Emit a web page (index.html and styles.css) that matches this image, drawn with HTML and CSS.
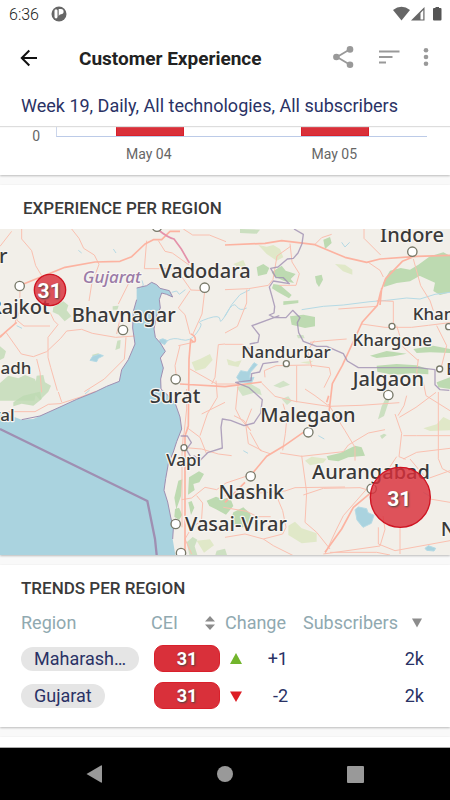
FILE: index.html
```html
<!DOCTYPE html>
<html lang="en">
<head>
<meta charset="utf-8">
<meta name="viewport" content="width=device-width, initial-scale=1">
<title>Customer Experience</title>
<link rel="stylesheet" href="styles.css">
</head>
<body>
<header class="top">
  <div class="status">
    <span class="clock">6:36</span>
    <svg class="app-dot" width="16" height="16" viewBox="0 0 16 16" aria-hidden="true"><circle cx="8" cy="8" r="7.500" fill="#666"/><path d="M3.500 4.800q0-1.600 1.500-1.600t1.500 1.600v6q0 1.600-1.500 1.600t-1.500-1.600z" fill="#fff"/><path d="M7.700 3h2.300a2.500 2.500 0 0 1 0 5.200q-1.500 0-2.300 1.800z" fill="#fff"/></svg>
    <svg class="signals" width="50" height="16" viewBox="0 0 50 16" aria-hidden="true">
      <path d="M0 4Q8.500-2.500 17 4L8.500 14.500Z" fill="#666"/>
      <path d="M31.500 1v13.500H18z" fill="#666"/><path d="M27.500 7l2.800-3v9.500h-2.800z" fill="#fff"/>
      <path d="M40 3q0-1 1-1h1.500V1h3.500v1h1.500q1 0 1 1v10.500q0 1-1 1h-6.500q-1 0-1-1z" fill="#555"/>
    </svg>
  </div>
  <div class="appbar">
    <button class="icon-btn back" aria-label="Back"><svg width="18" height="18" viewBox="0 0 18 18"><path d="M17 9H2M9.300 1.500L1.800 9l7.500 7.500" fill="none" stroke="#111" stroke-width="2"/></svg></button>
    <h1>Customer Experience</h1>
    <button class="icon-btn" aria-label="Share"><svg width="21" height="24" viewBox="0 0 21 24"><path d="M17 3.200L4 11l13 7.800" fill="none" stroke="#999" stroke-width="1.800"/><circle cx="17" cy="3.400" r="3.300" fill="#999"/><circle cx="3.400" cy="11" r="3.300" fill="#999"/><circle cx="17" cy="18.800" r="3.300" fill="#999"/></svg></button>
    <button class="icon-btn sort" aria-label="Sort"><svg width="21" height="16" viewBox="0 0 21 16"><path d="M0 1.500h20.500M0 7h13.500M0 12.500h7" stroke="#999" stroke-width="2"/></svg></button>
    <button class="icon-btn more" aria-label="More options"><svg width="6" height="20" viewBox="0 0 6 20"><g fill="#999"><circle cx="3" cy="2.300" r="2.300"/><circle cx="3" cy="9" r="2.300"/><circle cx="3" cy="15.700" r="2.300"/></g></svg></button>
  </div>
  <p class="filters">Week 19, Daily, All technologies, All subscribers</p>
</header>

<main>
  <section class="card chart" aria-label="Daily chart">
    <span class="zero">0</span>
    <div class="plot"><i class="bar"></i><i class="bar"></i></div>
    <div class="days"><span>May 04</span><span>May 05</span></div>
  </section>

  <section class="card">
    <h2 class="map-title">EXPERIENCE PER REGION</h2>
    <svg class="map" viewBox="0 0 1350 978" preserveAspectRatio="xMidYMid slice" role="img" aria-label="Map of regions">
      <rect width="1350" height="978" fill="#f2efe9"/>
      <g class="wood">
        <path d="M0 352l18 15-6 20-12 6zM0 462l25-22 30 8 20-10 30 12 8 25-10 40H0zM110 440l20-2 5 22 18 10-8 18-25 25-18-20zM160 235l30-18 15 12-5 15 14 18-20 15-18-20-18-8zM338 232l18-2-4 12h-14zM352 335l10-2-2 25-14 5zM275 378l22-6-8 16z" opacity=".75"/>
        <path d="M40 520l30-20 50-12 5 22-25 20-35-6-25 8z" opacity=".8"/>
        <path d="M770 115l20-10 18 12-8 18-26 6zM815 130l30-20 12 15 30 10-15 15 10 12-30-6-30-14zM945 142l20-5 4 15-12 22-8-12zM970 32l20-8 5 18-20 18zM820 165l20 3 35 30-8 10-35-20-16-10zM850 217l45-3v8l-45 6z"/>
        <path d="M1158 145l12-20 32-8 28 5 25-15 10 30-35 20-40 5-38 12-2-12zM1255 107l35-25 40-12 20 10v110l-30 8-20-12 5-25-45-20-12-10z"/>
        <path d="M870 262l40-5 35 7v28l-30 5-40-10zM1130 410l60-5 60 4 35 12v15l-50-3-55 5-48-10zM1110 380l50-14 60 8-40 8-50 5zM1240 360l60-10 50 10v12l-60-2-40 2zM1310 460l40-15v35l-35-5z"/>
        <path d="M710 475l40-12 30 18 5 18-22-8-35 10zM820 470l30-15 20 12-30 10zM845 510l20-8 10 14-14 12zM890 318l20 0 4 10h-20z" opacity=".6"/>
        <path d="M980 682l40-10 45-22 20 5 10 25-50 5-30 12-30-4z"/>
        <path d="M535 755l12-4-4 50-14 40-6-35zM567 745l30-18 15 8-14 25-18 5 4 18-20 14zM525 840l12-4 10 22-10 15-14-10zM565 820l10-4 8 20-10 22zM620 815l28-12 20 8 22-6 10 26-22 26-30-16-20-10zM700 850l30-15 20 18 10 30-40 15-30-20z"/>
        <path d="M720 0l60 2-10 12-50-2zM1145 532l14-28 8 12-15 45-18 10zM1140 620l12-6 8 4-14 12z" opacity=".75"/>
        <path d="M560 940l18-16 14 8-8 20 8 26h-24zM650 965l25-6 6 19h-35z" opacity=".7"/>
      </g>
      <g class="scrub">
        <path d="M775 48l25 5 20-5 20 12 10 25-20 10-30-20zM1005 105l30 2 22 15v15l-28-10zM915 695l20-12 45 6-10 12-40 8zM1270 598l40-12 20-22 20 10v30l-60 2zM575 400l25-10 30-15 8 18-22 25-30 8zM680 390l25 8 20-4-10 20-30-6zM865 890l20-12 20 20 45 15v25l-45 5-40-25zM590 935l40-4 12 18-30 22zM700 105l30-12 8 18-20 5zM900 400l40-5-12 10z"/>
      </g>
      <path class="sea" d="M410 177L440 170 455 160 470 167 480 178 508 185 518 204 500 196 485 192 478 212 481 237 470 260 462 300 466 325 481 342 496 367 481 387 490 417 482 450 483 480 505 500 526 524 540 564 545 600 530 638 520 669 505 704 497 749 492 784 503 819 512 864 520 899 518 930 526 978H0V550L45 565 65 572 100 570 120 561 180 534 230 511 285 489 320 472 358 457 365 422 385 392 405 345 398 297 400 247 410 212Z"/>
      <g class="river">
        <path d="M478 333q10-8 24 2l-8 12-16-8M270 394l8-12 20-6 12 4-15 8-5 10z" fill="#aad3df"/>
        <path d="M710 445l12-20 20 4 20-28 10 6-20 22-4 18 14-2-8 18-34-4zM1065 842l10-8 25 5 4 12 18 8-8 24-25 12-18-22-4-22zM1275 958l10-8 22 8-5 8-22-2z" fill="#aad3df"/>
        <path d="M500 336q20-12 45-4t45-20 10-30 25-14 35 4 20-20 30-20 30 5M515 190l15-4 8 10 18-14M420 180l10-12-4-14M675 262l20-35 25-30 30-15M905 242l65-10 60-4 80-10 50-4 60-7 40 3 45-14 45-6M955 620l18 10M255 495l14-12M730 665l14 8M1025 40l10 14 14-14M1270 790l20 12M340 60l8 12M50 290l16 8M235 64l10 8" fill="none"/>
      </g>
      <g class="road">
        <path d="M65 0v30l30 35 12 45 18 30M0 52l35-45M215 0l22 28 14 30 32 20 14 28-22 60-8 50M440 35l-7 84h95l45 64 45 2M60 187l-2 60-8 26 22 18 78 0M150 250l12 25 12 12-30 38v60l8 30 20 70M0 320l18-10 46 65 36 8 40-15 42-40 18-22 45-5 32 12 70 12 58-4M378 325l-5 65-60 60-60 38M15 310l30-25 5-28M110 390l10 40 5 60M360 270l-10 45M385 165l-30 60"/>
        <path d="M550 0l28 18h50l50 20M475 35l20 32 22 5 50 36M570 185l-35 52 20 20 15 58M614 187l-8 68-28 62M675 345l-20 2-10 98-10 20M570 420l80 45h65M535 350l45-10M540 350l-15 60 5 40M560 480v60l-8 75M560 595l40 30 20 50M600 620l22-65 30-50-4-50M675 520l-70 35"/>
        <path d="M675 182l70-3 60-10 14-18 12-70 42-30M740 182v40l-28 70-37 20M675 346h52l30 18M870 44l6 55 22 35-10 35-50 0M945 46l20-20 30-10M1092 0v28l50 50M1105 100l35 24 10 20M1085 285l70 10h80l50-6 80-10M1130 215l50 2v74M1015 240l115-8M1240 90l22 80 28 45 10 30M1190 290l20 65 45 40M930 340l45-5 65-5M795 445l-2-20 35-15 100-2 60 8 4 20-20 40M935 415l-12-50 20-30M1310 290l30 60-20 80M1255 390l-5 40 20 30 8 40 72 45"/>
        <path d="M0 550l40-2h65l40-22 35-2 62-20 45-17M175 489l10 30M550 615l-4 60 0 220M545 655l60 5 50 15 40 5M545 812l30-5 40-32 35 7 28-20 60-20M575 975l-20-45 20-34 28-20M590 800l18 22-4 60M750 610l30 54 30 10M785 664l-40-20-8-60 18-45M848 664l8-50 5-50-12-40M840 672l65 10 125-14 15-20 60-36 50-10M905 680l15 110-5 90 35 30 40 50M910 798l60-20 110-2 20 6M675 800l180-14 30-10 150-2M675 925l60-10 55 15 58-15 10-20-10-50-25-60M790 930l30 20 60 30M670 835l70 12 32 16 40 0"/>
        <path d="M785 462l40 40 60 15 100 15 98-3 115-8M890 410v110M985 525l50 80 30 50v40M985 530l-40-30-30-20M715 460l-8 80 15 30 30 35-20-30-30-15M1185 555l20 58-8 70 20 8M1210 620l40 0h100M1198 565l50-30 60-45M1315 489v200l12 30 23 12M1220 500l-8 30-18 30M1190 683l-40 60M1210 690l40-20 100-12M1230 690l50 60 70-25M1290 810l60 10M1100 780l-70 80-20 40-35 75M970 975l170-24 15-50-6-40M1135 895v50l50 20 165-30M1200 895v80M990 970l140 0 40 8"/>
      </g>
      <g class="main-road">
        <path d="M65 167l130-52 90-16 75-2 35-14 40-38 25-13h25l25-25h30M0 325l15-15M15 310l35-30"/>
        <path d="M675 48l120-5 50-8 100 12 90 38 65 15 40-10 110-8 100-3M1237 85l-30 12-50 52-15 40-10 40-45 50-60 130-30 55-10 85M1140 228l5-50M540 465l135 8 110-14M572 315q15 5 14 18t-14-2l-5 60-2 200-10 30v350"/>
        <path d="M750 742l50-60 50-30 60-42M1120 785l-60 50-35 65-50 70M675 820l60-60M980 520l6-20"/>
      </g>
      <path d="M472 0q30 25 50 30l22 30 24 42" fill="none" stroke="#e491aa" stroke-width="5"/>
      <g class="border">
        <path d="M882 0l28 16-4 28-12 28-14 16-18 2-28 24-22 4 16 28 22 0 18 18-48-8-12 18 8 28 8 30-2 20-14 6 15 8 35 0 20-22 22 22-8 15 4 30 14 26 40 15 30 0 50 22 12 22 33 20 180 0 50 6 0 45 15 15 28 2M838 260l-82 30 22 28-4 22-25 5M835 398l-46 6-10 25-24 5-2 20-46 6 40 16 40 36-5 40-20 30-30 8-40-16-25-4-4 25 4 62-44 14-24 24-16-14-10 4-14-24 15-20-12-20h-20" stroke-opacity=".8"/>
        <path d="M0 600L442 816 465 930 470 978" stroke-width="7"/>
        <path d="M410 177L440 170 455 160 470 167 480 178 508 185 518 204 500 196 485 192 478 212 481 237 470 260 462 300 466 325 481 342 496 367 481 387 490 417 482 450 483 480 505 500 526 524 540 564 545 600 530 638 520 669 505 704 497 749 492 784 503 819 512 864 520 899 518 930M65 572L120 561 180 534 230 511 285 489 320 472 358 457 365 422 385 392 405 345 398 297 400 247 410 212" stroke-width="3"/>
      </g>
      <g class="town">
        <circle cx="59" cy="171" r="14"/><circle cx="614" cy="176" r="14"/><circle cx="369" cy="303" r="14"/><circle cx="527" cy="451" r="14"/><circle cx="471" cy="-7" r="14"/><circle cx="1237" cy="68" r="14"/>
        <circle cx="1176" cy="292" r="9"/><circle cx="1346" cy="293" r="9"/><circle cx="859" cy="404" r="9"/><circle cx="1319" cy="420" r="9"/><circle cx="1165" cy="498" r="14"/><circle cx="925" cy="610" r="14"/><circle cx="752" cy="742" r="14"/><circle cx="552" cy="656" r="9"/><circle cx="527" cy="885" r="14"/><circle cx="543" cy="972" r="14"/><circle cx="1115" cy="779" r="14"/>
      </g>
      <g class="place">
        <text x="22" y="101" text-anchor="end">ar</text>
        <text x="149" y="256" text-anchor="end">Rajkot</text>
        <text x="615" y="146" text-anchor="middle">Vadodara</text>
        <text x="371" y="279" text-anchor="middle">Bhavnagar</text>
        <text x="525" y="523" text-anchor="middle">Surat</text>
        <text x="1236" y="40" text-anchor="middle">Indore</text>
        <text x="1165" y="471" text-anchor="middle">Jalgaon</text>
        <text x="924" y="580" text-anchor="middle">Malegaon</text>
        <text x="1113" y="749" text-anchor="middle">Aurangabad</text>
        <text x="754" y="809" text-anchor="middle">Nashik</text>
        <text x="555" y="906">Vasai-Virar</text>
        <text x="1322" y="922">Nanded</text>
      </g>
      <g class="place small">
        <text x="94" y="435" text-anchor="end">Junagadh</text>
        <text x="44" y="576" text-anchor="end">Veraval</text>
        <text x="858" y="387" text-anchor="middle">Nandurbar</text>
        <text x="1177" y="352" text-anchor="middle">Khargone</text>
        <text x="1238" y="272">Khandwa</text>
        <text x="1339" y="439">Burhanpur</text>
        <text x="551" y="711" text-anchor="middle">Vapi</text>
        <text class="state" x="336" y="162" text-anchor="middle">Gujarat</text>
      </g>
      <g class="marker">
        <circle cx="150" cy="183" r="47"/><circle cx="1201" cy="805" r="90"/>
        <text x="149" y="206">31</text><text x="1198" y="830">31</text>
      </g>
    </svg>
  </section>

  <section class="card trends">
    <h2>TRENDS PER REGION</h2>
    <table>
      <colgroup><col class="c-region"><col class="c-cei"><col class="c-change"><col></colgroup>
      <thead>
        <tr>
          <th>Region</th>
          <th><button class="th-btn">CEI <svg width="10" height="14" viewBox="0 0 10 14"><path d="M0 5.500L5 0l5 5.500zM0 8.500L5 14l5-5.500z" fill="#8c8c8c"/></svg></button></th>
          <th>Change</th>
          <th><button class="th-btn subs">Subscribers <svg width="10" height="10" viewBox="0 0 10 10"><path d="M0 .5h10L5 9.500z" fill="#8c8c8c"/></svg></button></th>
        </tr>
      </thead>
      <tbody>
        <tr>
          <td><span class="pill">Maharash…</span></td>
          <td><span class="score">31</span></td>
          <td><span class="change"><svg width="12" height="12" viewBox="0 0 12 12"><path d="M6 0L12 11H0z" fill="#72b52c"/></svg>+1</span></td>
          <td class="count">2k</td>
        </tr>
        <tr>
          <td><span class="pill">Gujarat</span></td>
          <td><span class="score">31</span></td>
          <td><span class="change"><svg width="12" height="12" viewBox="0 0 12 12"><path d="M0 1.500h12L6 12z" fill="#dd1d25"/></svg>-2</span></td>
          <td class="count">2k</td>
        </tr>
      </tbody>
    </table>
  </section>
  <section class="card next"></section>
</main>

<nav class="sysnav" aria-label="System">
  <button aria-label="Back"><svg width="16" height="18" viewBox="0 0 16 18"><path d="M.5 9L15 .5q1-.5 1 .5v16q0 1-1 .5z" fill="#999"/></svg></button>
  <button aria-label="Home"><svg width="16" height="16" viewBox="0 0 16 16"><circle cx="8" cy="8" r="8" fill="#999"/></svg></button>
  <button aria-label="Recent apps"><svg width="17" height="17" viewBox="0 0 17 17"><rect width="17" height="17" rx="1" fill="#999"/></svg></button>
</nav>
</body>
</html>
```
FILE: styles.css
```css
* { box-sizing: border-box; }

body {
  margin: 0;
  min-height: 100vh;
  display: flex;
  flex-direction: column;
  background: #f9f9f9;
  color: #2a3265;
  font-family: Roboto, "Liberation Sans", sans-serif;
  font-size: 18px;
}

h1, h2, p { margin: 0; }
svg { display: block; flex: none; }

button {
  padding: 0;
  border: 0;
  background: none;
  font: inherit;
  color: inherit;
}

.top {
  position: relative;
  background: #fff;
  box-shadow: 0 1px 1px #ddd;
}

.status {
  display: flex;
  align-items: center;
  height: 28px;
  padding: 0 7px 0 9px;
  font-size: 16px;
  font-weight: 300;
  color: #222;
}
.app-dot { margin-left: 12px; }
.signals { margin-left: auto; }

.appbar {
  display: flex;
  align-items: center;
  height: 60px;
  padding: 0 21px 0 20px;
}
.appbar h1 {
  flex: 1;
  margin-left: 41px;
  font-size: 19px;
  font-weight: 700;
  color: #222;
  white-space: nowrap;
}
.icon-btn.sort { margin-left: 25px; }
.icon-btn.more { margin-left: 23px; }

.filters {
  height: 38px;
  padding: 0 21px;
  line-height: 36px;
  white-space: nowrap;
}

main {
  flex: 1;
  display: flex;
  flex-direction: column;
  gap: 10px;
}

.card {
  background: #fff;
  box-shadow: 0 1px 2px #bbb;
}
.card h2 {
  font-size: 17px;
  font-weight: 500;
  color: #3a3a3a;
}

.chart {
  display: grid;
  grid-template-columns: 56px 1fr;
  padding: 0 23px 13px 0;
  font-size: 14px;
  color: #666;
}
.zero {
  padding-right: 16px;
  line-height: 20px;
  text-align: right;
}
.plot {
  display: grid;
  grid-template-columns: 1fr 1fr;
  justify-items: center;
  height: 11px;
  border-left: 1px solid #ccd6eb;
  border-bottom: 1px solid #bccbe8;
}
.bar {
  width: 68px;
  background: #d9303a;
  border: 1px solid #d9202b;
}
.days {
  grid-column: 2;
  display: grid;
  grid-template-columns: 1fr 1fr;
  line-height: 16px;
  text-align: center;
}

.map-title {
  padding: 2px 23px 0;
  line-height: 42px;
}
.map {
  width: 100%;
  height: auto;
}
.wood { fill: #bddab1; }
.scrub { fill: #e0e8c8; }
.sea { fill: #aad3df; }
.river { stroke: #b5dae5; stroke-width: 3; }
.road, .main-road, .border { fill: none; stroke-linejoin: round; }
.road { stroke: #fac0b0; stroke-width: 3; }
.main-road { stroke: #fcb3a1; stroke-width: 5; }
.border { stroke: #9f8fb2; stroke-width: 4; }
.town { fill: #fff; stroke: #777868; stroke-width: 4; }
.place {
  font-family: "Noto Sans", sans-serif;
  font-size: 60px;
  font-weight: 500;
  fill: #3a3a3a;
  stroke: #f8f6f2;
  stroke-width: 7;
  paint-order: stroke;
  stroke-linejoin: round;
}
.small { font-size: 51px; }
.state {
  fill: #9b7ba7;
  font-style: italic;
}
.marker circle {
  fill: #d9303a;
  fill-opacity: .82;
  stroke: #cf1422;
  stroke-width: 4;
}
.marker text {
  font-size: 63px;
  font-weight: 700;
  fill: #fff;
  text-anchor: middle;
  text-shadow: 1px 1px 2px #444;
}

.trends { padding: 11px 26px 13px 21px; }
.trends h2 { line-height: 25px; }

table {
  width: 100%;
  table-layout: fixed;
  border-collapse: collapse;
}
.c-region { width: 130px; }
.c-cei { width: 74px; }
.c-change { width: 78px; }
th, td {
  height: 37px;
  padding: 0;
  text-align: left;
  vertical-align: middle;
}
th {
  height: 39px;
  padding-top: 4px;
  font-weight: 400;
  color: #90a9b0;
}
.th-btn {
  display: flex;
  align-items: center;
  gap: 27px;
}
.subs { gap: 14px; }
.pill {
  display: inline-block;
  padding: 0 13px;
  border-radius: 12px;
  background: #e5e5e5;
  line-height: 24px;
  vertical-align: middle;
}
.score {
  display: block;
  width: 66px;
  margin-left: 3px;
  border: 1px solid #d9202b;
  border-radius: 9px;
  background: #d9303a;
  color: #fff;
  font-weight: 700;
  line-height: 25px;
  text-align: center;
  text-shadow: 1px 1px 2px #444;
}
.change {
  display: flex;
  align-items: center;
  justify-content: space-between;
  padding: 0 15px 0 5px;
}
.count { text-align: right; }

.next { flex: 1; min-height: 9px; }

.sysnav {
  position: relative;
  display: grid;
  grid-template-columns: repeat(3, 1fr);
  height: 53px;
  padding: 0 29px;
  border-top: 1px solid #aaa;
  background: #000;
}
.sysnav button {
  display: flex;
  align-items: center;
  justify-content: center;
}
```
